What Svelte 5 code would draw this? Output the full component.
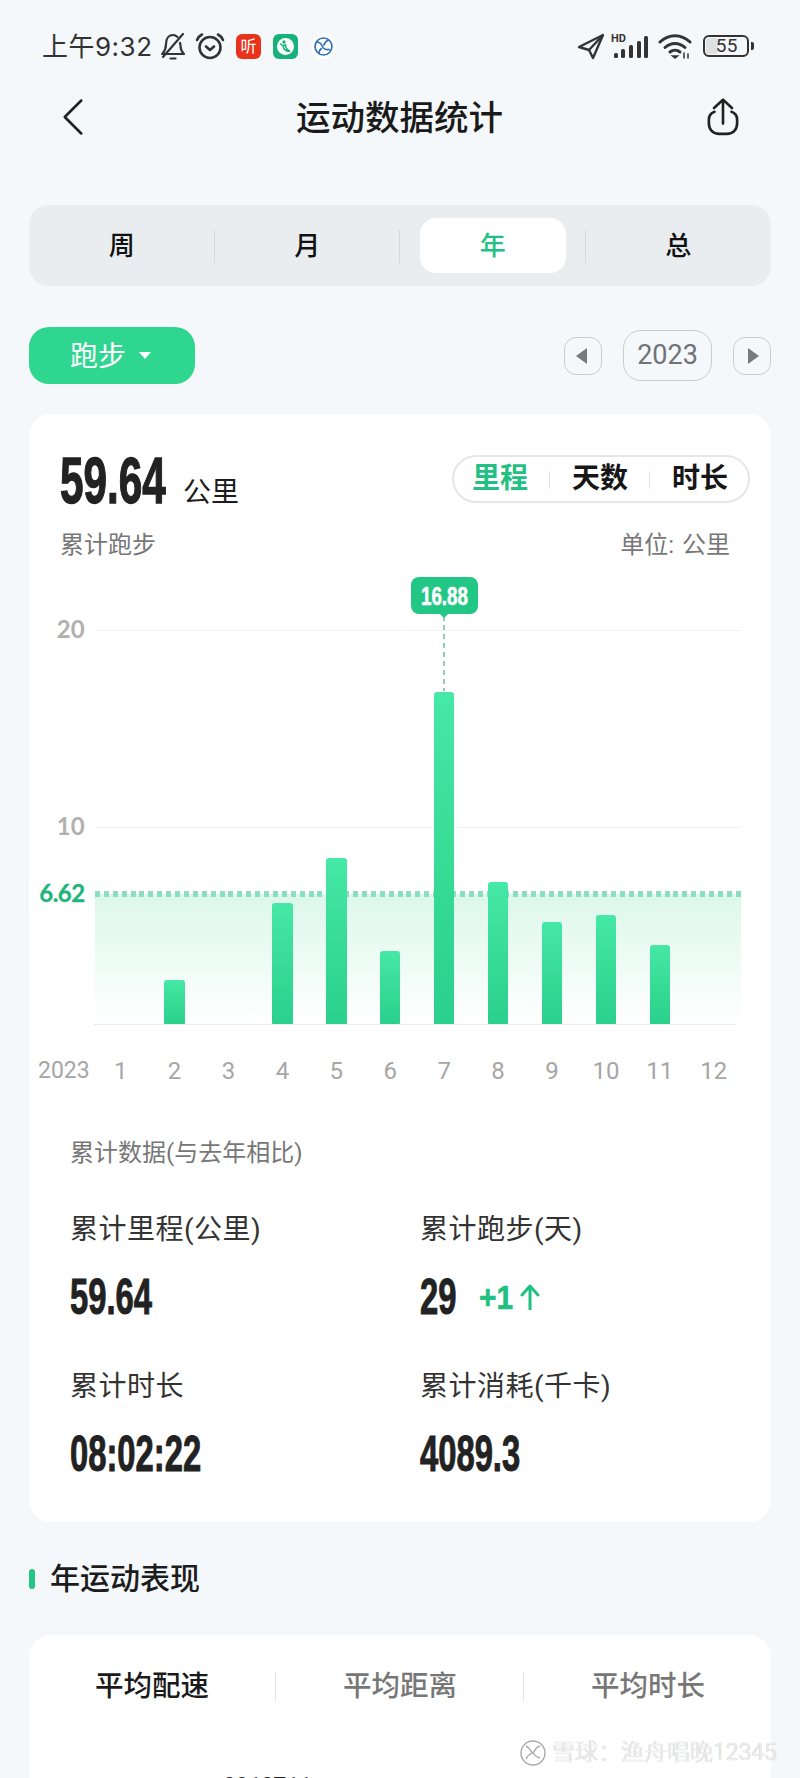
<script>
  const tabs = ['周', '月', '年', '总'];
  const metrics = ['里程', '天数', '时长'];
  const months = [
    { m: 1, top: 0 }, { m: 2, top: 980 }, { m: 3, top: 0 }, { m: 4, top: 903 },
    { m: 5, top: 858 }, { m: 6, top: 951 }, { m: 7, top: 692 }, { m: 8, top: 882 },
    { m: 9, top: 922 }, { m: 10, top: 915 }, { m: 11, top: 945 }, { m: 12, top: 0 }
  ];
  const barHeight = (t) => (t ? 1024 - t : 0);
</script>

<div class="page">
  <header class="status">
    <div class="status-left">
      <span class="time">上午9:32</span>
      <svg class="bell" viewBox="0 0 26 28" fill="none" stroke="#333" stroke-width="2.2" stroke-linecap="round" stroke-linejoin="round">
        <path d="M2 22h22c-2-2-3.500-4-3.500-8 0-1-.1-2-.5-3M17.500 5C16 3.500 14.700 3 13 3 8.500 3 6 7 6 12c0 4-1 6.500-3 9" />
        <path d="M3 25 23 2" />
        <path d="M10.500 26.500h5" />
      </svg>
      <svg class="alarm" viewBox="0 0 30 28" fill="none" stroke="#333" stroke-width="2.6" stroke-linecap="round" stroke-linejoin="round">
        <circle cx="15" cy="15.500" r="10.500" />
        <path d="M11 14.500l4 3.500 4-3.500" />
        <path d="M2 8c1-2.500 3-4.500 5-5.500M28 8c-1-2.500-3-4.500-5-5.500" />
      </svg>
      <span class="app red">听</span>
      <span class="app green">
        <svg viewBox="0 0 25 25" fill="none">
          <circle cx="12.500" cy="12.500" r="8.500" fill="#fff" />
          <circle cx="11" cy="8" r="1.700" fill="#16b27a" />
          <path d="M7.500 10c1.500 1.200 3.500 1.800 5 1 0 2.500 1 5 4.500 6-3.500.8-6.500-1.500-7-5" stroke="#16b27a" stroke-width="1.600" stroke-linecap="round" />
        </svg>
      </span>
      <span class="app ball">
        <svg viewBox="0 0 25 25" fill="none" stroke="#2f6fb5" stroke-width="1.600" stroke-linecap="round">
          <circle cx="12.500" cy="12.500" r="8.500" />
          <path d="M5.500 8c3 0 5 2 6 4.500 1 2.500 3 3.500 7 3" />
          <path d="M17.500 6c-2.500 1-4 3-4.500 5M10.500 14.500c-1.500 1-2.500 3-2.500 5" />
        </svg>
      </span>
    </div>
    <div class="status-right">
      <svg class="loc" viewBox="0 0 28 27" fill="none" stroke="#333" stroke-width="2.400" stroke-linejoin="round">
        <path d="M26 2 2 14l10 3 4 8z" />
        <path d="M26 2 12 17" />
      </svg>
      <span class="signal">
        <span class="hd">HD</span>
        <svg viewBox="0 0 36 24" fill="#333">
          <rect x="1" y="18" width="4" height="5" rx="1.500" />
          <rect x="8" y="14" width="4" height="9" rx="1.500" />
          <rect x="16" y="10" width="4" height="13" rx="1.500" />
          <rect x="24" y="6" width="4" height="17" rx="1.500" />
          <rect x="31" y="1" width="4" height="22" rx="1.500" />
        </svg>
      </span>
      <svg class="wifi" viewBox="0 0 34 26" fill="none" stroke="#333" stroke-width="3" stroke-linecap="round">
        <path d="M2 9c9-8.500 21-8.500 30 0" />
        <path d="M7 14.500c6-5.500 14-5.500 20 0" />
        <path d="M12 19c3-2.500 7-2.500 10 0" />
        <path d="M14.500 23 17 25l2.500-2z" fill="#333" stroke-width="1.500" />
        <path d="M26 25v-5M30 25v-4" stroke-width="1.500" />
      </svg>
      <span class="battery"><span class="level"></span><span class="pct">55</span></span>
      <span class="nub"></span>
    </div>
  </header>

  <nav class="topbar">
    <svg class="back" viewBox="0 0 24 40" fill="none" stroke="#222" stroke-width="2.800" stroke-linecap="round" stroke-linejoin="round">
      <path d="M21 2 3 20l18 18" />
    </svg>
    <h1>运动数据统计</h1>
    <svg class="share" viewBox="0 0 34 40" fill="none" stroke="#222" stroke-width="2.800" stroke-linecap="round" stroke-linejoin="round">
      <path d="M17 27V2M7.500 10.500 17 1.500l9.500 9" />
      <path d="M8 14.500C3.500 16 2 19 2 23v4c0 6 4 11 11 11h8c7 0 11-5 11-11v-4c0-4-1.500-7-6-8.500" />
    </svg>
  </nav>

  <div class="segment">
    {#each tabs as t, i}
      <div class="seg-item" class:active={t === '年'} class:sep={i < 3}>
        <span class="seg-label">{t}</span>
      </div>
    {/each}
  </div>

  <div class="filter">
    <button class="sport"><span class="sport-label">跑步</span><span class="caret"></span></button>
    <div class="years">
      <span class="step"><span class="tri left"></span></span>
      <span class="year">2023</span>
      <span class="step"><span class="tri right"></span></span>
    </div>
  </div>

  <section class="card main">
    <div class="head">
      <div class="total">
        <span class="cond big">59.64</span>
        <span class="unit">公里</span>
      </div>
      <div class="toggle">
        {#each metrics as m, i}
          <span class="tog" class:on={i === 0} class:sep={i < 2}>{m}</span>
        {/each}
      </div>
    </div>
    <div class="sub">
      <span>累计跑步</span>
      <span class="unit-note">单位: 公里</span>
    </div>

    <div class="plot">
      <div class="grid-line" style="top:0"></div>
      <div class="grid-line" style="top:197px"></div>
      <div class="grid-line base"></div>
      <span class="ylab" style="top:-1px">20</span>
      <span class="ylab" style="top:196px">10</span>
      <span class="ylab avg">6.62</span>
      <div class="avg-fill"></div>
      <div class="avg-line"></div>
      <div class="bars">
        {#each months as b}
          <div class="bar" style="height:{barHeight(b.top)}px"></div>
        {/each}
      </div>
      <div class="pin"></div>
      <div class="tip"><span class="cond tip-text">16.88</span></div>
    </div>

    <div class="axis">
      <span class="axis-year">2023</span>
      {#each months as b}
        <span>{b.m}</span>
      {/each}
    </div>

    <div class="note">累计数据(与去年相比)</div>

    <div class="stats">
      <div class="stat">
        <div class="stat-label">累计里程(公里)</div>
        <div class="stat-value"><span class="cond val">59.64</span></div>
      </div>
      <div class="stat">
        <div class="stat-label">累计跑步(天)</div>
        <div class="stat-value">
          <span class="cond val">29</span>
          <span class="cond delta">+1</span>
          <svg class="up" viewBox="0 0 20 26" fill="none" stroke="#22c083" stroke-width="3" stroke-linecap="round" stroke-linejoin="round">
            <path d="M10 25V3M2 11l8-9 8 9" />
          </svg>
        </div>
      </div>
      <div class="stat">
        <div class="stat-label">累计时长</div>
        <div class="stat-value"><span class="cond val">08:02:22</span></div>
      </div>
      <div class="stat">
        <div class="stat-label">累计消耗(千卡)</div>
        <div class="stat-value"><span class="cond val">4089.3</span></div>
      </div>
    </div>
  </section>

  <div class="section-title"><span class="mark"></span>年运动表现</div>

  <section class="card perf">
    <div class="perf-tabs">
      <span class="perf-tab cur">平均配速</span>
      <span class="perf-tab">平均距离</span>
      <span class="perf-tab">平均时长</span>
    </div>
    <div class="perf-value">0010711</div>
  </section>

  <div class="watermark">
    <svg viewBox="0 0 28 28" fill="none" stroke="#aaa" stroke-width="1.400">
      <circle cx="14" cy="14" r="12" fill="#ffffffcc" />
      <path d="M7 7c6 3 5 9 14 12M7 20c3-6 7-6 8-7M15 13c1-3 3-5 6-6" />
    </svg>
    <span>雪球：渔舟唱晚12345</span>
  </div>
</div>

<style>
  :global(body) {
    margin: 0;
    background: #f4f8fa;
  }
  .page {
    position: relative;
    width: 800px;
    height: 1778px;
    overflow: hidden;
    background: #f4f8fa;
    font-family: Roboto, "Noto Sans CJK SC", sans-serif;
    color: #1c1c1c;
  }
  .status {
    height: 92px;
    box-sizing: border-box;
    padding: 0 46px 0 42px;
    display: flex;
    align-items: center;
    justify-content: space-between;
  }
  .status-left,
  .status-right {
    display: flex;
    align-items: center;
  }
  .time {
    font-family: Inter, "Noto Sans CJK SC", sans-serif;
    font-size: 26px;
    letter-spacing: 0.500px;
    color: #333;
    width: 118px;
    white-space: nowrap;
    margin-top: -3px;
  }
  .bell { width: 26px; height: 28px; }
  .alarm { width: 30px; height: 28px; margin-left: 9px; }
  .app {
    width: 25px;
    height: 25px;
    border-radius: 6px;
    display: flex;
    align-items: center;
    justify-content: center;
    margin-left: 11px;
  }
  .app svg { width: 25px; height: 25px; }
  .red {
    background: #e8321a;
    color: #fff;
    font-size: 16px;
    line-height: 25px;
  }
  .green {
    background: #16b27a;
    margin-left: 12px;
  }
  .ball {
    background: #fff;
    border-radius: 50%;
    margin-left: 13px;
  }
  .loc { width: 28px; height: 27px; }
  .signal {
    position: relative;
    width: 36px;
    height: 24px;
    margin-left: 8px;
    margin-top: 2px;
  }
  .signal svg { width: 36px; height: 24px; display: block; }
  .hd {
    position: absolute;
    left: -2px;
    top: -2px;
    font-size: 11px;
    font-weight: 700;
    color: #333;
    line-height: 11px;
  }
  .wifi { width: 34px; height: 26px; margin-left: 9px; }
  .battery {
    position: relative;
    box-sizing: border-box;
    width: 46px;
    height: 22px;
    margin-left: 11px;
    border: 2px solid #333;
    border-radius: 6px;
    display: flex;
    align-items: center;
    justify-content: flex-end;
    padding-right: 9px;
  }
  .level {
    position: absolute;
    left: 1px;
    top: 1px;
    bottom: 1px;
    width: 12px;
    background: #dde1e4;
    border-radius: 2px;
  }
  .pct {
    position: relative;
    font-size: 19px;
    letter-spacing: 0.500px;
    line-height: 18px;
    color: #333;
  }
  .nub {
    width: 3px;
    height: 8px;
    margin-left: 2px;
    background: #333;
    border-radius: 0 2px 2px 0;
  }
  .topbar {
    height: 52px;
    padding: 0 61px 0 62px;
    display: flex;
    align-items: center;
    justify-content: space-between;
  }
  .back { width: 22px; height: 38px; margin-top: -3px; }
  .share { width: 32px; height: 38px; margin-top: -3px; }
  h1 {
    margin: 0 0 0 8px;
    font-size: 34.500px;
    font-weight: 500;
    line-height: 52px;
    color: #1a1a1a;
  }
  .segment {
    margin: 61px 29px 0;
    height: 81px;
    box-sizing: border-box;
    background: #e9edf0;
    border-radius: 20px;
    display: grid;
    grid-template-columns: repeat(4, 1fr);
    padding: 13px 0;
  }
  .seg-item {
    position: relative;
    display: flex;
    align-items: center;
    justify-content: center;
    font-size: 26px;
    font-weight: 500;
    color: #111;
    margin: 0 20px;
  }
  .seg-label { margin-top: -4px; }
  .seg-item.sep::after {
    content: "";
    position: absolute;
    right: -20px;
    top: 12px;
    bottom: 10px;
    width: 1px;
    background: #d3d9dc;
  }
  .seg-item.active {
    background: #fff;
    border-radius: 16px;
    color: #22c083;
  }
  .filter {
    margin: 41px 29px 0;
    height: 57px;
    display: flex;
    align-items: center;
    justify-content: space-between;
  }
  .sport {
    width: 166px;
    height: 57px;
    border: 0;
    border-radius: 20px;
    background: #2fd690;
    color: #fff;
    font: 400 28px/57px Roboto, "Noto Sans CJK SC", sans-serif;
    display: flex;
    align-items: center;
    padding: 0 0 0 41px;
    box-sizing: border-box;
  }
  .sport-label { margin-top: 2px; }
  .caret {
    width: 0;
    height: 0;
    margin-left: 13px;
    border-left: 6.500px solid transparent;
    border-right: 6.500px solid transparent;
    border-top: 7px solid #fff;
  }
  .years {
    display: flex;
    align-items: center;
    gap: 21px;
  }
  .step {
    width: 38px;
    height: 38px;
    box-sizing: border-box;
    border: 1px solid #c6cccf;
    border-radius: 12px;
    display: flex;
    align-items: center;
    justify-content: center;
  }
  .tri {
    width: 0;
    height: 0;
    border-top: 8px solid transparent;
    border-bottom: 8px solid transparent;
  }
  .tri.left { border-right: 11px solid #767b7e; margin-right: 3px; }
  .tri.right { border-left: 11px solid #767b7e; margin-left: 3px; }
  .year {
    width: 89px;
    height: 51px;
    box-sizing: border-box;
    border: 1px solid #c6cccf;
    border-radius: 18px;
    text-align: center;
    font-size: 27px;
    line-height: 49px;
    color: #6f7376;
  }
  .card {
    margin: 0 29px;
    background: #fff;
    border-radius: 22px;
  }
  .main {
    margin-top: 30px;
    height: 1108px;
    box-sizing: border-box;
    padding-top: 41px;
    overflow: hidden;
  }
  .head {
    display: flex;
    justify-content: space-between;
    height: 48px;
    padding: 0 21px 0 31px;
  }
  .total {
    display: flex;
    align-items: flex-end;
  }
  .cond {
    display: inline-block;
    font-family: "Liberation Sans", sans-serif;
    font-weight: 700;
    transform-origin: left center;
    -webkit-text-stroke: 1px currentColor;
    white-space: nowrap;
  }
  .big {
    font-size: 64px;
    line-height: 48px;
    width: 123px;
    margin-top: 4px;
    color: #222;
    transform: translateY(2px) scaleX(0.66);
    -webkit-text-stroke-width: 1.300px;
  }
  .unit {
    font-size: 28px;
    line-height: 34px;
    margin-bottom: -7px;
    color: #1c1c1c;
    white-space: nowrap;
  }
  .toggle {
    width: 298px;
    height: 48px;
    box-sizing: border-box;
    border: 2px solid #e6e6e6;
    border-radius: 24px;
    display: grid;
    grid-template-columns: repeat(3, 100px);
    justify-content: center;
    align-items: center;
  }
  .tog {
    position: relative;
    text-align: center;
    font-size: 28px;
    font-weight: 700;
    line-height: 44px;
    color: #161616;
    left: -1px;
  }
  .tog.on { color: #22c083; }
  .tog.sep::after {
    content: "";
    position: absolute;
    right: 0;
    top: 14px;
    height: 18px;
    width: 1px;
    background: #e3e3e3;
  }
  .sub {
    margin-top: 25px;
    height: 34px;
    padding: 0 41px 0 31px;
    display: flex;
    justify-content: space-between;
    font-size: 24px;
    line-height: 34px;
    color: #777;
  }
  .unit-note { word-spacing: 2px; }
  .plot {
    position: relative;
    width: 647px;
    height: 394px;
    margin: 68px 0 0 64.700px;
  }
  .grid-line {
    position: absolute;
    left: 2px;
    right: 0;
    height: 1px;
    background: #eff1f2;
  }
  .grid-line.base {
    top: 394px;
    left: 0;
    right: 6px;
    background: #e8ecec;
  }
  .ylab {
    position: absolute;
    right: calc(100% + 9px);
    font: 700 24px/24px Lato, sans-serif;
    color: #b0b0b0;
    transform: translateY(-12px);
  }
  .ylab.avg {
    top: 263px;
    color: #1fb57d;
    letter-spacing: -0.500px;
    -webkit-text-stroke: 0.300px #1fb57d;
  }
  .avg-fill {
    position: absolute;
    left: 1px;
    right: 0;
    bottom: 0;
    height: 130px;
    background: linear-gradient(#dcf7eb, #ffffff);
  }
  .avg-line {
    position: absolute;
    left: 1px;
    right: 0;
    top: 261px;
    height: 6px;
    background: repeating-linear-gradient(90deg, #8adfbe 0 5px, transparent 5px 8.900px);
  }
  .bars {
    position: absolute;
    inset: 0;
    display: grid;
    grid-template-columns: repeat(12, 1fr);
    align-items: end;
    justify-items: center;
  }
  .bar {
    width: 20.500px;
    border-radius: 3px 3px 1px 1px;
    background: linear-gradient(#45e8a4, #2ad08b);
  }
  .pin {
    position: absolute;
    left: 349.500px;
    top: -14px;
    height: 75px;
    width: 1.500px;
    background: repeating-linear-gradient(#8fcdb4 0 5px, transparent 5px 9px);
  }
  .tip {
    position: absolute;
    left: 317.300px;
    top: -53px;
    width: 67px;
    height: 37px;
    background: #22c785;
    border-radius: 8px;
    display: flex;
    align-items: center;
    padding-left: 10px;
    box-sizing: border-box;
  }
  .tip::after {
    content: "";
    position: absolute;
    left: 29px;
    bottom: -4px;
    border-left: 4px solid transparent;
    border-right: 4px solid transparent;
    border-top: 4px solid #22c785;
  }
  .tip-text {
    font-size: 26px;
    line-height: 30px;
    color: #fff;
    transform: scaleX(0.72);
    -webkit-text-stroke-width: 0.600px;
  }
  .axis {
    position: relative;
    width: 647px;
    height: 32px;
    margin: 31px 0 0 64.700px;
    display: grid;
    grid-template-columns: repeat(12, 1fr);
    justify-items: center;
    font-size: 24px;
    line-height: 32px;
    color: #a6a6a6;
  }
  .axis-year {
    position: absolute;
    right: calc(100% + 4px);
    top: 0;
    font-size: 23px;
  }
  .note {
    margin: 50px 0 0 41px;
    height: 32px;
    font-size: 24px;
    line-height: 32px;
    color: #777;
  }
  .stats {
    margin: 41px 0 0 41px;
    display: grid;
    grid-template-columns: 350px 1fr;
    row-gap: 45px;
  }
  .stat-label {
    font-size: 28px;
    letter-spacing: 0.500px;
    line-height: 40px;
    color: #333;
    white-space: nowrap;
  }
  .stat-value {
    margin-top: 22px;
    height: 50px;
    display: flex;
    align-items: center;
  }
  .val {
    font-size: 50px;
    line-height: 50px;
    color: #222;
    transform: scaleX(0.655);
  }
  .delta {
    margin-left: 3px;
    width: 32px;
    font-size: 34px;
    line-height: 36px;
    color: #22c083;
    transform: scaleX(0.88);
    -webkit-text-stroke-width: 0.600px;
  }
  .up {
    width: 20px;
    height: 26px;
    margin-left: 9px;
  }
  .section-title {
    margin: 40px 0 0 29px;
    height: 34px;
    display: flex;
    align-items: center;
    font-size: 30px;
    font-weight: 500;
    line-height: 34px;
    color: #1c1c1c;
  }
  .mark {
    width: 6px;
    height: 20px;
    margin-right: 15px;
    border-radius: 3px;
    background: #22c785;
  }
  .perf {
    margin-top: 39px;
    height: 200px;
    box-sizing: border-box;
    padding-top: 34px;
    overflow: hidden;
  }
  .perf-tabs {
    display: grid;
    grid-template-columns: repeat(3, 248px);
    height: 36px;
    margin-left: -1px;
  }
  .perf-tab {
    position: relative;
    text-align: center;
    font-size: 28.500px;
    line-height: 36px;
    font-weight: 500;
    color: #777;
  }
  .perf-tab.cur { color: #1a1a1a; }
  .perf-tab:not(:last-child)::after {
    content: "";
    position: absolute;
    right: 0;
    top: 3px;
    bottom: 3px;
    width: 1px;
    background: #e6e9ea;
  }
  .perf-value {
    margin: 66px 0 0 194px;
    font-size: 22px;
    font-weight: 700;
    line-height: 30px;
    color: #222;
  }
  .watermark {
    position: absolute;
    left: 519px;
    top: 1739px;
    display: flex;
    align-items: center;
    gap: 5px;
    font-size: 23px;
    font-weight: 300;
    line-height: 28px;
    color: #f0f0f0;
    text-shadow: 0 0 1px #a8a8a8;
    white-space: nowrap;
  }
  .watermark svg { width: 28px; height: 28px; }
</style>
